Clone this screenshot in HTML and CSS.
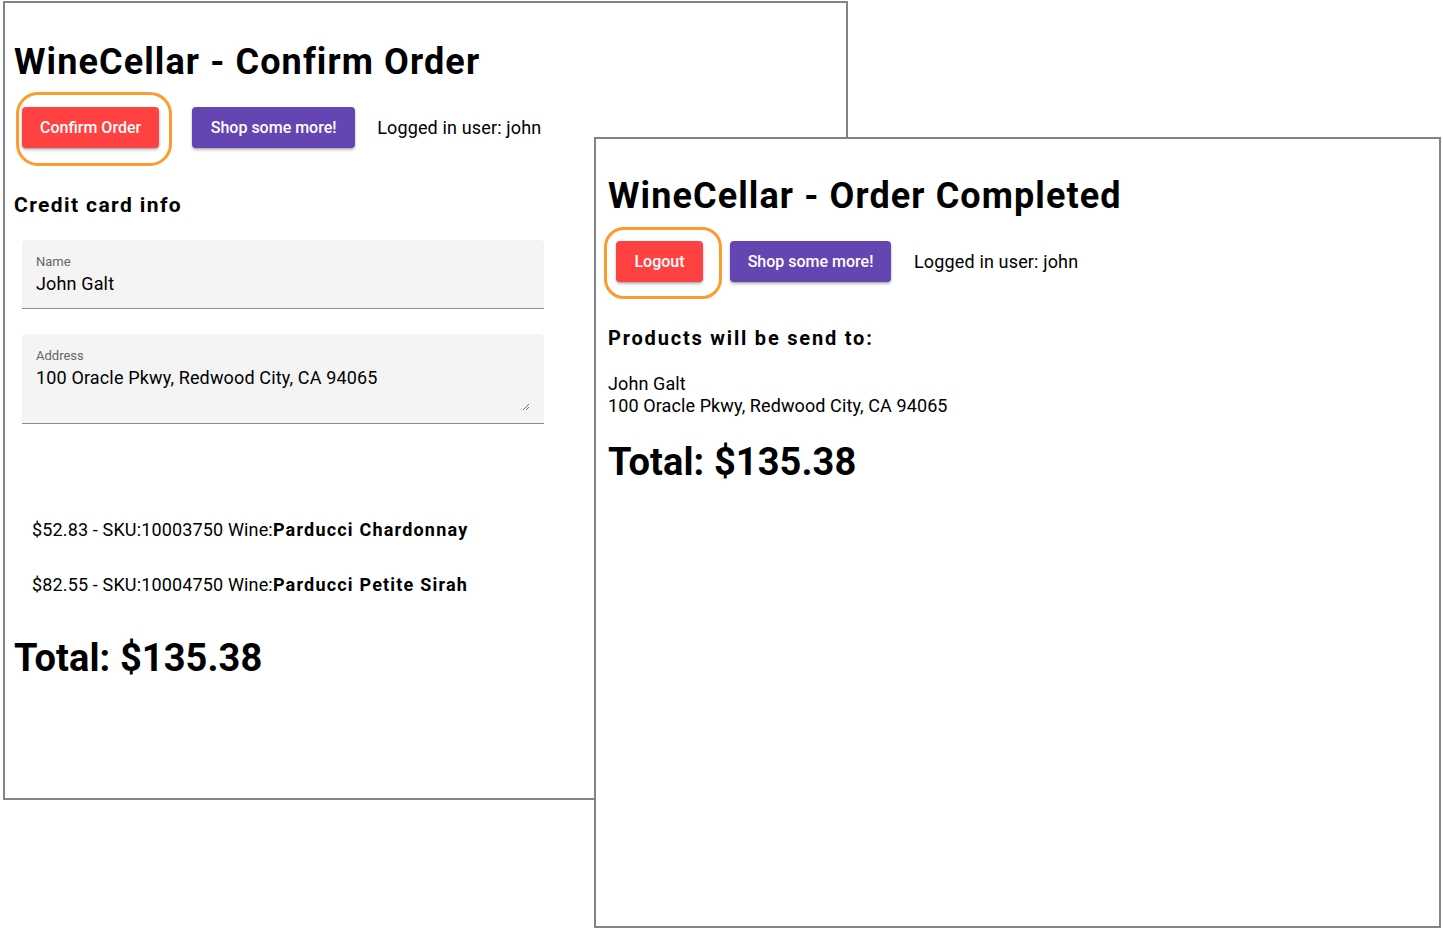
FILE: index.html
```html
<!DOCTYPE html>
<html lang="en">
<head>
<meta charset="utf-8">
<title>WineCellar</title>
<link rel="stylesheet" href="styles.css">
</head>
<body>
<div class="desk">
  <section class="win win-confirm">
    <h1 class="title">WineCellar - Confirm Order</h1>
    <div class="toolbar">
      <div class="ringed ring-confirm">
        <button class="btn btn-red">Confirm Order</button>
        <span class="ring"></span>
      </div>
      <button class="btn btn-purple btn-shop1">Shop some more!</button>
      <span class="user">Logged in user: john</span>
    </div>
    <h2 class="subtitle">Credit card info</h2>
    <div class="field field-name">
      <span class="label">Name</span>
      <span class="value">John Galt</span>
    </div>
    <div class="field field-address">
      <span class="label">Address</span>
      <span class="value">100 Oracle Pkwy, Redwood City, CA 94065</span>
      <svg class="grip" width="8" height="8" viewBox="0 0 8 8"><path d="M7 1 L1 7 M7 4 L4 7" stroke="#777" stroke-width="1" fill="none"/></svg>
    </div>
    <ul class="items">
      <li>$52.83 - SKU:10003750 Wine:<b>Parducci Chardonnay</b></li>
      <li>$82.55 - SKU:10004750 Wine:<b>Parducci Petite Sirah</b></li>
    </ul>
    <div class="total">Total: $135.38</div>
  </section>

  <section class="win win-done">
    <h1 class="title title2">WineCellar - Order Completed</h1>
    <div class="toolbar toolbar-done">
      <div class="ringed ring-logout">
        <button class="btn btn-red btn-logout">Logout</button>
        <span class="ring"></span>
      </div>
      <button class="btn btn-purple btn-shop2">Shop some more!</button>
      <span class="user user2">Logged in user: john</span>
    </div>
    <h2 class="subtitle subtitle2">Products will be send to:</h2>
    <p class="addr">John Galt<br>100 Oracle Pkwy, Redwood City, CA 94065</p>
    <div class="total total2">Total: $135.38</div>
  </section>
</div>
</body>
</html>
```

FILE: styles.css
```css
* { box-sizing: border-box; }
html, body { margin: 0; padding: 0; background: #fff; }
body {
  font-family: Roboto, "Liberation Sans", Arial, sans-serif;
  color: #000;
  width: 1443px;
  height: 930px;
  overflow: hidden;
}
.desk { position: relative; width: 1443px; height: 930px; }

.win {
  position: absolute;
  background: #fff;
  border: 2px solid #848484;
  display: flex;
  flex-direction: column;
  align-items: flex-start;
}
.win-confirm { left: 3px; top: 1px; width: 845px; height: 799px; padding: 0 9px; }
.win-done { left: 594px; top: 137px; width: 847px; height: 791px; padding: 0 12px; }

.title {
  margin: 38px 0 0;
  font-size: 36px;
  line-height: 42px;
  font-weight: 700;
  letter-spacing: 1.1px;
}
.title2 { margin-top: 36px; }

.toolbar {
  display: flex;
  align-items: center;
  margin-top: 23px;
  height: 43px;
}
.toolbar-done { margin-top: 23px; }

.ringed { position: relative; display: flex; }
.ring {
  position: absolute;
  border: 3px solid #ff9a2e;
  border-radius: 22px;
  pointer-events: none;
}
.ring-confirm { margin-left: 8px; }
.ring-confirm .ring { left: -6px; top: -15px; right: -13px; bottom: -18px; }
.ring-logout { margin-left: 8px; }
.ring-logout .ring { left: -12px; top: -14px; right: -19px; bottom: -17px; border-radius: 20px; }

.btn {
  font-family: Roboto, "Liberation Sans", Arial, sans-serif;
  font-weight: 500;
  font-size: 16px;
  color: #fff;
  border: none;
  border-radius: 4px;
  height: 41px;
  padding: 0 18px;
  box-shadow: 0 2px 3px rgba(0,0,0,0.25), 0 1px 1px rgba(0,0,0,0.12);
  letter-spacing: 0;
}
.btn-red { background: #ff4141; }
.btn-purple { background: #6545b2; }
.btn-red.btn-logout { width: 87px; padding: 0; }
.btn-shop1 { margin-left: 33px; width: 163px; padding: 0; }
.btn-shop2 { margin-left: 27px; width: 161px; padding: 0; }

.user { margin-left: 22px; font-size: 18px; letter-spacing: 0.15px; }
.user2 { margin-left: 23px; }

.subtitle {
  margin: 43px 0 0;
  font-size: 21px;
  line-height: 26px;
  font-weight: 700;
  letter-spacing: 1.4px;
}

.field {
  position: relative;
  margin-left: 8px;
  width: 522px;
  background: #f4f4f4;
  border-radius: 4px 4px 0 0;
  border-bottom: 1px solid #8c8c8c;
  display: flex;
  flex-direction: column;
  padding: 14px 14px 0;
}
.field-name { margin-top: 22px; height: 69px; }
.field-address { margin-top: 25px; height: 90px; }
.label { font-size: 13px; line-height: 16px; color: #666; }
.value { font-size: 18px; line-height: 22px; margin-top: 3px; letter-spacing: 0.15px; }
.grip { position: absolute; right: 14px; bottom: 12px; }

.items {
  list-style: none;
  margin: 95px 0 0;
  padding: 0 0 0 18px;
  display: flex;
  flex-direction: column;
  gap: 33px;
}
.items li { font-size: 18px; line-height: 22px; letter-spacing: 0.15px; }
.items b { letter-spacing: 1.2px; font-weight: 700; }

.total {
  margin-top: 40px;
  font-size: 38px;
  line-height: 44px;
  font-weight: 700;
  letter-spacing: 0.1px;
}

.subtitle2 { margin-top: 42px; font-size: 20px; letter-spacing: 1.8px; }
.addr { margin: 22px 0 0; font-size: 18px; line-height: 22px; letter-spacing: 0.1px; }
.total2 { margin-top: 23px; }
```
